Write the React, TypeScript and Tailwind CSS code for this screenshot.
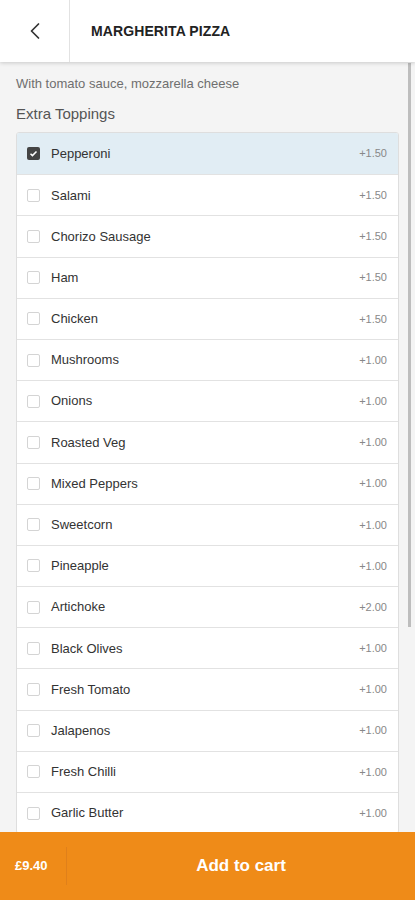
import { ChevronLeft } from "lucide-react"

const toppings = [
  { name: "Pepperoni", price: "+1.50", checked: true },
  { name: "Salami", price: "+1.50" },
  { name: "Chorizo Sausage", price: "+1.50" },
  { name: "Ham", price: "+1.50" },
  { name: "Chicken", price: "+1.50" },
  { name: "Mushrooms", price: "+1.00" },
  { name: "Onions", price: "+1.00" },
  { name: "Roasted Veg", price: "+1.00" },
  { name: "Mixed Peppers", price: "+1.00" },
  { name: "Sweetcorn", price: "+1.00" },
  { name: "Pineapple", price: "+1.00" },
  { name: "Artichoke", price: "+2.00" },
  { name: "Black Olives", price: "+1.00" },
  { name: "Fresh Tomato", price: "+1.00" },
  { name: "Jalapenos", price: "+1.00" },
  { name: "Fresh Chilli", price: "+1.00" },
  { name: "Garlic Butter", price: "+1.00" },
]

export default function App() {
  return (
    <div className="flex flex-col h-[900px] w-[415px] bg-[#f4f4f4] overflow-hidden font-['Liberation_Sans',Arial,sans-serif]">
      {/* Header */}
      <div className="relative z-10 flex h-[62px] shrink-0 bg-white shadow-[0_1px_4px_rgba(0,0,0,0.18)]">
        <div className="flex w-[70px] items-center justify-center border-r border-[#e2e2e2]">
          <ChevronLeft className="w-7 h-7 text-[#333]" strokeWidth={1.5} />
        </div>
        <div className="flex items-center pl-[21px] text-[14px] font-bold text-[#222] tracking-[0.1px]">
          MARGHERITA PIZZA
        </div>
      </div>

      {/* Content */}
      <div className="relative flex-1 overflow-hidden px-4 pt-[14px]">
        <p className="text-[13px] leading-4 text-[#6f6f6f]">With tomato sauce, mozzarella cheese</p>
        <h2 className="mt-[13px] text-[15px] leading-[18px] text-[#555]">Extra Toppings</h2>
        <div className="mt-[9px] rounded-[3px] border border-[#dedede] bg-white overflow-hidden">
          {toppings.map((t, i) => (
            <div
              key={t.name}
              className={`flex h-[41.2px] items-center pl-[10px] pr-[11px] ${
                i > 0 ? "border-t border-[#e2e2e2]" : ""
              } ${t.checked ? "bg-[#e1edf4]" : ""}`}
            >
              {t.checked ? (
                <span className="flex w-[13px] h-[13px] items-center justify-center rounded-[2px] bg-[#444]">
                  <svg viewBox="0 0 12 12" className="w-[9px] h-[9px]" fill="none" stroke="white" strokeWidth={2}>
                    <path d="M2 6.3l2.6 2.5L10 3.3" />
                  </svg>
                </span>
              ) : (
                <span className="w-[13px] h-[13px] rounded-[2px] border border-[#d4d4d4] bg-white" />
              )}
              <span className="ml-[11px] flex-1 text-[13px] text-[#333]">{t.name}</span>
              <span className="text-[11px] text-[#888]">{t.price}</span>
            </div>
          ))}
        </div>
        {/* scroll indicator */}
        <div className="absolute right-[4px] top-[1px] h-[564px] w-[3px] bg-[#bdbdbd]" />
      </div>

      {/* Footer */}
      <div className="flex h-[68px] shrink-0 items-center bg-[#ef8b18] text-white">
        <div className="flex h-[38px] w-[67px] items-center border-r border-[#e0801a] pl-[15px] text-[13px] font-bold">
          £9.40
        </div>
        <div className="flex-1 text-center text-[17px] font-bold">Add to cart</div>
      </div>
    </div>
  )
}
